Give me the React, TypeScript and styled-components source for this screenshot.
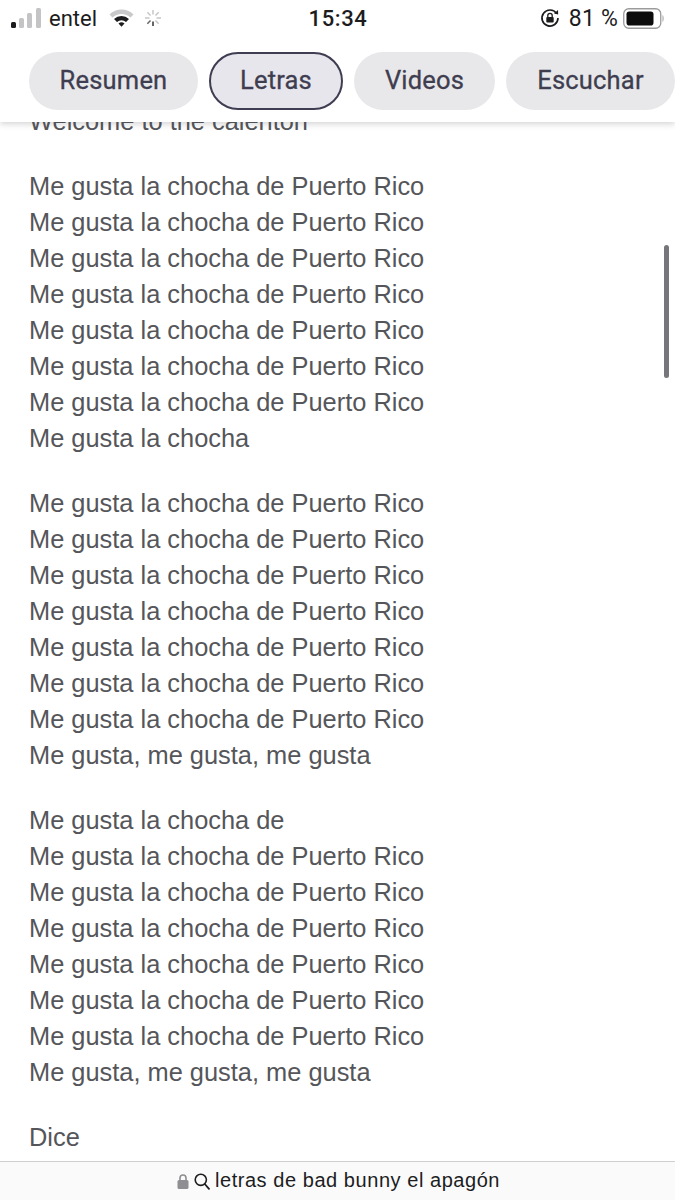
import React from "react"
import styled, { createGlobalStyle } from "styled-components"

const GlobalStyle = createGlobalStyle`
  html, body {
    margin: 0;
    padding: 0;
    background: #fff;
  }
`

const Page = styled.div`
  position: relative;
  width: 675px;
  height: 1200px;
  overflow: hidden;
  display: flex;
  flex-direction: column;
  background: #fff;
  font-family: "Liberation Sans", Arial, sans-serif;
`

const Header = styled.header`
  position: relative;
  z-index: 2;
  height: 122px;
  flex: none;
  background: #fff;
  box-shadow: 0 2px 6px rgba(60, 60, 70, 0.22);
`

const StatusBar = styled.div`
  height: 36px;
  display: flex;
  align-items: center;
  justify-content: space-between;
  padding: 0 10px 0 11px;
  color: #1c1c1e;
  font-family: Roboto, sans-serif;
  font-size: 22px;
`

const StatusSide = styled.div`
  width: 220px;
  display: flex;
  align-items: center;
  justify-content: ${(p: { $end?: boolean }) => (p.$end ? "flex-end" : "flex-start")};
`

const Carrier = styled.span`
  margin: 0 12px 0 7px;
`

const Clock = styled.span`
  font-size: 22px;
  font-weight: 500;
  letter-spacing: 0.6px;
`

const BatteryText = styled.span`
  margin: 0 5px 0 9px;
  white-space: nowrap;
  font-size: 23px;
  letter-spacing: 0.2px;
`

const Spinner = styled.svg`
  margin-left: 10px;
`

const Tabs = styled.nav`
  display: flex;
  gap: 11px;
  padding: 16px 0 0 29px;
  white-space: nowrap;
`

const Tab = styled.div<{ $active?: boolean; $width: number }>`
  box-sizing: border-box;
  flex: none;
  width: ${(p) => p.$width}px;
  height: 58px;
  display: flex;
  align-items: center;
  justify-content: center;
  padding-bottom: 2px;
  border-radius: 29px;
  background: ${(p) => (p.$active ? "#e6e6ec" : "#e8e8ea")};
  border: ${(p) => (p.$active ? "2px solid #3f3d52" : "none")};
  color: #3f3d50;
  font-family: Roboto, sans-serif;
  font-size: 25.5px;
  font-weight: 400;
  letter-spacing: 0.2px;
  -webkit-text-stroke: 0.3px #3f3d50;
`

const Lyrics = styled.main`
  flex: 1;
  min-height: 0;
  margin-top: -19px;
  padding-left: 29px;
  color: #55565a;
  font-size: 25.4px;
  line-height: 36px;
`

const Stanza = styled.p`
  margin: 0 0 29px;
`

const Line = styled.span`
  display: block;
`

const Scrollbar = styled.div`
  position: absolute;
  top: 245px;
  right: 6px;
  width: 5px;
  height: 133px;
  border-radius: 3px;
  background: #77777b;
`

const AddressBar = styled.footer`
  position: relative;
  z-index: 2;
  flex: none;
  height: 38px;
  display: flex;
  align-items: center;
  justify-content: center;
  gap: 5px;
  padding-left: 2px;
  border-top: 1px solid #cfcfd1;
  background: #fafafa;
  color: #1d1d1f;
  font-size: 20px;
  letter-spacing: 0.55px;
`

const Query = styled.span`
  margin-bottom: 1px;
`

const SignalIcon = () => (
  <svg width="31" height="22" viewBox="0 0 31 22">
    <rect x="0" y="15" width="5" height="6" rx="1.5" fill="#1c1c1e" />
    <rect x="8" y="11" width="5" height="10" rx="1.5" fill="#c4c4c6" />
    <rect x="16" y="6" width="5" height="15" rx="1.5" fill="#c4c4c6" />
    <rect x="25" y="1" width="5" height="20" rx="1.5" fill="#c4c4c6" />
  </svg>
)

const WifiIcon = () => (
  <svg width="25" height="20" viewBox="0 0 25 20">
    <path d="M0.5 6.5 A17 17 0 0 1 24.5 6.5 L21.5 9.5 A13 13 0 0 0 3.5 9.5 Z" fill="#c9c9cb" />
    <path d="M5 11 A11 11 0 0 1 20 11 L17 14 A7 7 0 0 0 8 14 Z" fill="#1c1c1e" />
    <path d="M9.5 15.5 A4.5 4.5 0 0 1 15.5 15.5 L12.5 18.8 Z" fill="#1c1c1e" />
  </svg>
)

const SPOKES = [0, 45, 90, 135, 180, 225, 270, 315]

const SpinnerIcon = () => (
  <Spinner width="18" height="18" viewBox="0 0 18 18">
    {SPOKES.map((angle, i) => (
      <line
        key={angle}
        x1="9"
        y1="1"
        x2="9"
        y2="5.5"
        stroke={i === 4 ? "#333" : i === 5 ? "#666" : "#c6c6c8"}
        strokeWidth="1.5"
        transform={`rotate(${angle} 9 9)`}
      />
    ))}
  </Spinner>
)

const RotationLockIcon = () => (
  <svg width="20" height="20" viewBox="0 0 20 20">
    <path d="M16.6 5.5 A8 8 0 1 0 18 10" fill="none" stroke="#1c1c1e" strokeWidth="1.7" />
    <path d="M14 5.5 L18.2 6.5 L18 2 Z" fill="#1c1c1e" />
    <rect x="6.3" y="9" width="7.4" height="5.6" rx="1" fill="#1c1c1e" />
    <path d="M7.8 9 V7.6 A2.2 2.2 0 0 1 12.2 7.6 V9" fill="none" stroke="#1c1c1e" strokeWidth="1.3" />
  </svg>
)

const BatteryIcon = () => (
  <svg width="42" height="21" viewBox="0 0 42 21">
    <rect x="0.75" y="0.75" width="37" height="19.5" rx="5" fill="none" stroke="#9b9b9d" strokeWidth="1.3" />
    <rect x="3.5" y="3.5" width="27" height="14" rx="2.8" fill="#0c0c0d" />
    <path d="M39.5 7 C41 7.5 41 13.5 39.5 14 Z" fill="#a5a5a7" />
  </svg>
)

const LockIcon = () => (
  <svg width="12" height="15" viewBox="0 0 12 15">
    <rect x="0.5" y="6" width="11" height="9" rx="1.6" fill="#8e8e93" />
    <path d="M3 6 V4 A3 3 0 0 1 9 4 V6" fill="none" stroke="#8e8e93" strokeWidth="1.6" />
  </svg>
)

const SearchIcon = () => (
  <svg width="16" height="17" viewBox="0 0 16 17">
    <circle cx="6.8" cy="6.8" r="5.6" fill="none" stroke="#1d1d1f" strokeWidth="1.6" />
    <path d="M10.8 11 L15 15.8" stroke="#1d1d1f" strokeWidth="1.8" strokeLinecap="round" />
  </svg>
)

const CHORUS = "Me gusta la chocha de Puerto Rico"
const repeat = (n: number) => Array.from({ length: n }, () => CHORUS)

const STANZAS: string[][] = [
  ["Welcome to the calentón"],
  [...repeat(7), "Me gusta la chocha"],
  [...repeat(7), "Me gusta, me gusta, me gusta"],
  ["Me gusta la chocha de", ...repeat(6), "Me gusta, me gusta, me gusta"],
  ["Dice"],
]

const TABS = [
  { label: "Resumen", width: 169 },
  { label: "Letras", width: 134, active: true },
  { label: "Videos", width: 141 },
  { label: "Escuchar", width: 169 },
]

const App = () => (
  <Page>
    <GlobalStyle />
    <Header>
      <StatusBar>
        <StatusSide>
          <SignalIcon />
          <Carrier>entel</Carrier>
          <WifiIcon />
          <SpinnerIcon />
        </StatusSide>
        <Clock>15:34</Clock>
        <StatusSide $end>
          <RotationLockIcon />
          <BatteryText>81 %</BatteryText>
          <BatteryIcon />
        </StatusSide>
      </StatusBar>
      <Tabs>
        {TABS.map((tab) => (
          <Tab key={tab.label} $active={tab.active} $width={tab.width}>
            {tab.label}
          </Tab>
        ))}
      </Tabs>
    </Header>
    <Lyrics>
      {STANZAS.map((lines, i) => (
        <Stanza key={i}>
          {lines.map((line, j) => (
            <Line key={j}>{line}</Line>
          ))}
        </Stanza>
      ))}
    </Lyrics>
    <Scrollbar />
    <AddressBar>
      <LockIcon />
      <SearchIcon />
      <Query>letras de bad bunny el apagón</Query>
    </AddressBar>
  </Page>
)

export default App
